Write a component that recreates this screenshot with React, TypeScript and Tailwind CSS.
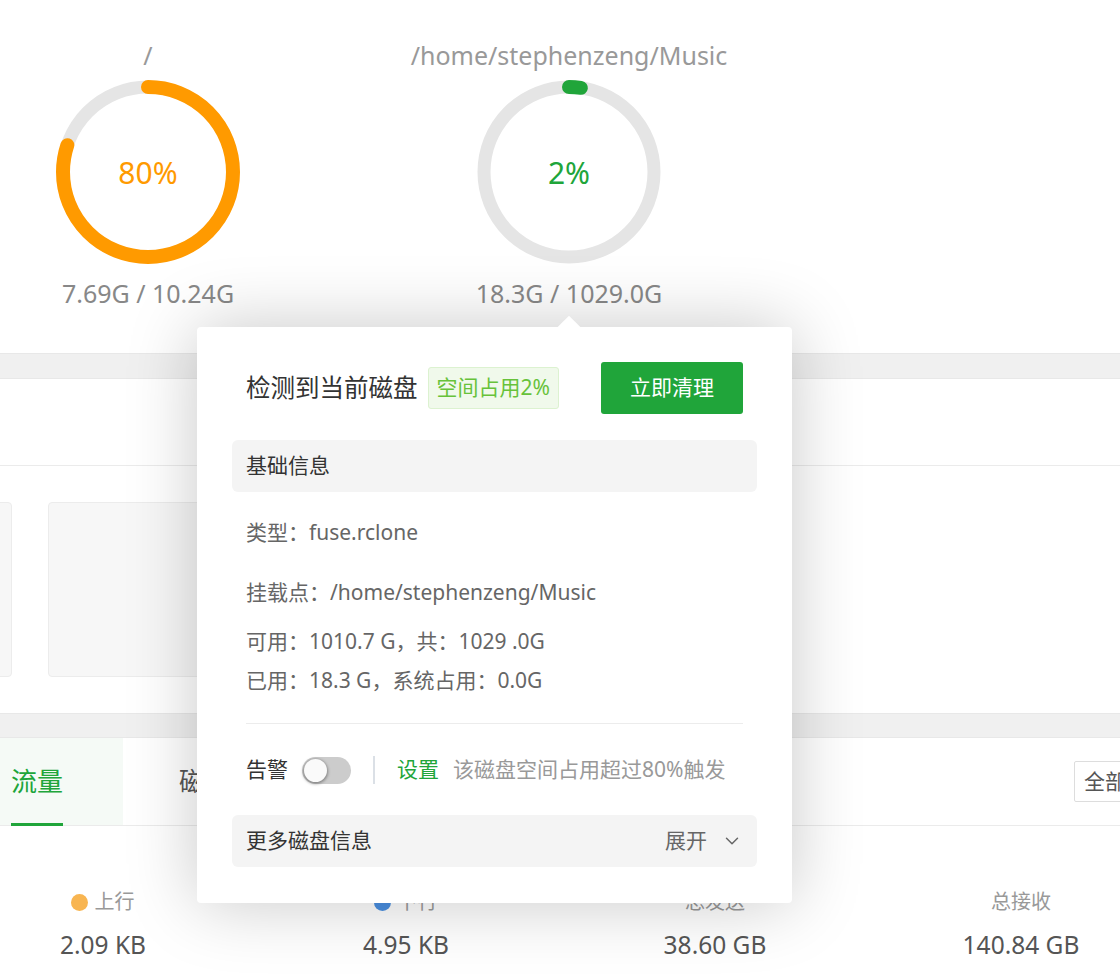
import { ChevronDown } from "lucide-react";

const font = "font-['Noto_Sans','Noto_Sans_CJK_SC',sans-serif]";

type Gauge = {
  path: string;
  percent: number;
  color: string;
  used: string;
  width: string;
};

const gauges: Gauge[] = [
  { path: "/", percent: 80, color: "#ff9a00", used: "7.69G / 10.24G", width: "w-[296px]" },
  { path: "/home/stephenzeng/Music", percent: 2, color: "#20a53a", used: "18.3G / 1029.0G", width: "w-[340px]" },
];

function Ring({ percent, color }: { percent: number; color: string }) {
  const r = 85;
  const c = 2 * Math.PI * r;
  // keep a tiny arc visible for small values
  const len = Math.max((percent / 100) * c, 12);
  return (
    <svg width="184" height="184" viewBox="0 0 184 184">
      <circle cx="92" cy="92" r={r} fill="none" stroke="#e5e5e5" strokeWidth="13" />
      <circle
        cx="92"
        cy="92"
        r={r}
        fill="none"
        stroke={color}
        strokeWidth="14"
        strokeLinecap="round"
        strokeDasharray={`${len} ${c}`}
        transform="rotate(-90 92 92)"
      />
    </svg>
  );
}

function Stat({ label, value, dot }: { label: string; value: string; dot?: string }) {
  return (
    <div className="flex flex-col items-center">
      <div className="flex items-center gap-[6px] text-[20px] leading-[30px] text-[#999]">
        {dot && <span className={`w-[17px] h-[17px] rounded-full ${dot}`} />}
        {label}
      </div>
      <div className="mt-[12px] text-[24.5px] leading-[32px] text-[#555]">{value}</div>
    </div>
  );
}

export default function App() {
  return (
    <div className={`relative w-[1120px] h-[979px] overflow-hidden bg-white ${font}`}>
      {/* disk gauges */}
      <div className="h-[353px] flex pt-[36px]">
        {gauges.map((g, i) => (
          <div key={g.path} className={`${g.width} flex flex-col items-center ${i === 1 ? "ml-[103px]" : ""}`}>
            <div className="text-[25px] leading-[38px] text-[#999]">{g.path}</div>
            <div className="relative mt-[6px] w-[184px] h-[184px]">
              <Ring percent={g.percent} color={g.color} />
              <div
                className={`absolute inset-0 flex items-center justify-center text-[30px] ${
                  i === 0 ? "text-[#ff9a00]" : "text-[#20a53a]"
                }`}
              >
                {g.percent}%
              </div>
            </div>
            <div className="mt-[14px] text-[25px] leading-[30px] text-[#888]">{g.used}</div>
          </div>
        ))}
      </div>

      <div className="h-[26px] bg-[#f0f0f0] border-y border-[#e8e8e8]" />
      <div className="h-[87px] border-b border-[#ebebeb]" />

      {/* overview cards */}
      <div className="h-[247px] flex gap-[36px] pt-[36px] ml-[-188px]">
        <div className="w-[200px] h-[175px] rounded-[4px] bg-[#f7f7f7] border border-[#ececec]" />
        <div className="w-[220px] h-[175px] rounded-[4px] bg-[#f7f7f7] border border-[#ececec]" />
      </div>

      <div className="h-[25px] bg-[#f0f0f0] border-y border-[#e8e8e8]" />

      {/* tabs */}
      <div className="h-[88px] flex items-stretch border-b border-[#ebebeb]">
        <div className="w-[123px] bg-[#f5faf6] relative flex items-center pl-[11px]">
          <span className="text-[26px] text-[#20a53a]">流量</span>
          <span className="absolute left-[11px] bottom-[-1px] w-[52px] h-[3px] bg-[#20a53a]" />
        </div>
        <div className="flex items-center pl-[56px] text-[26px] text-[#555]">磁盘IO</div>
        <div className="ml-auto mr-[-60px] flex items-center">
          <div className="h-[41px] w-[106px] border border-[#ddd] rounded-[2px] flex items-center pl-[9px] text-[21px] text-[#555]">
            全部
          </div>
        </div>
      </div>

      {/* traffic stats */}
      <div className="grid grid-cols-4 pt-[61px]">
        <div className="flex justify-center pr-[74px]"><Stat label="上行" value="2.09 KB" dot="bg-[#f8b551]" /></div>
        <div className="flex justify-center pl-[6px] pr-[34px]"><Stat label="下行" value="4.95 KB" dot="bg-[#4a90e2]" /></div>
        <div className="flex justify-center pl-[30px]"><Stat label="总发送" value="38.60 GB" /></div>
        <div className="flex justify-center pl-[82px]"><Stat label="总接收" value="140.84 GB" /></div>
      </div>

      {/* disk popover */}
      <div className="absolute left-[197px] top-[327px] w-[595px] h-[576px] bg-white rounded-[4px] shadow-[0_0_70px_rgba(0,0,0,0.22)] px-[35px] pt-[35px]">
        <span className="absolute left-[364px] top-[-8px] w-[16px] h-[16px] bg-white rotate-45" />
        <div className="relative flex items-center px-[14px]">
          <span className="text-[24.5px] leading-[52px] text-[#333]">检测到当前磁盘</span>
          <span className="ml-[10px] h-[42px] px-[8px] flex items-center rounded-[3px] bg-[#f0f9eb] border border-[#dcf2d0] text-[21px] text-[#67c23a]">
            空间占用2%
          </span>
          <button className="ml-auto h-[52px] w-[142px] rounded-[3px] bg-[#20a53a] text-white text-[21px]">
            立即清理
          </button>
        </div>

        <div className="mt-[26px] h-[52px] rounded-[6px] bg-[#f4f4f4] flex items-center px-[14px] text-[21px] text-[#333]">
          基础信息
        </div>

        <div className="px-[14px] text-[21px] text-[#666]">
          <div className="mt-[25px] leading-[30px]">类型：fuse.rclone</div>
          <div className="mt-[30px] leading-[30px]">挂载点：/home/stephenzeng/Music</div>
          <div className="mt-[19px] leading-[30px]">可用：1010.7 G，共：1029 .0G</div>
          <div className="mt-[9px] leading-[30px]">已用：18.3 G，系统占用：0.0G</div>
          <div className="mt-[28px] border-t border-[#ececec]" />
          <div className="mt-[18px] h-[56px] flex items-center">
            <span className="text-[21px] text-[#333]">告警</span>
            <span className="ml-[14px] w-[49px] h-[27px] rounded-full bg-[#cccccc] relative">
              <span className="absolute left-[2px] top-[2px] w-[23px] h-[23px] rounded-full bg-[#fafafa] shadow-[0_1px_3px_1px_rgba(0,0,0,0.35)]" />
            </span>
            <span className="ml-[22px] w-[2px] h-[28px] bg-[#dbe0e6]" />
            <span className="ml-[22px] text-[21px] text-[#20a53a]">设置</span>
            <span className="ml-[14px] text-[21px] text-[#999]">该磁盘空间占用超过80%触发</span>
          </div>
        </div>

        <div className="mt-[17px] h-[52px] rounded-[6px] bg-[#f4f4f4] flex items-center px-[14px] text-[21px] text-[#333]">
          更多磁盘信息
          <span className="ml-auto text-[#666]">展开</span>
          <ChevronDown className="ml-[14px] text-[#666]" size={22} strokeWidth={1.6} />
        </div>
      </div>
    </div>
  );
}
